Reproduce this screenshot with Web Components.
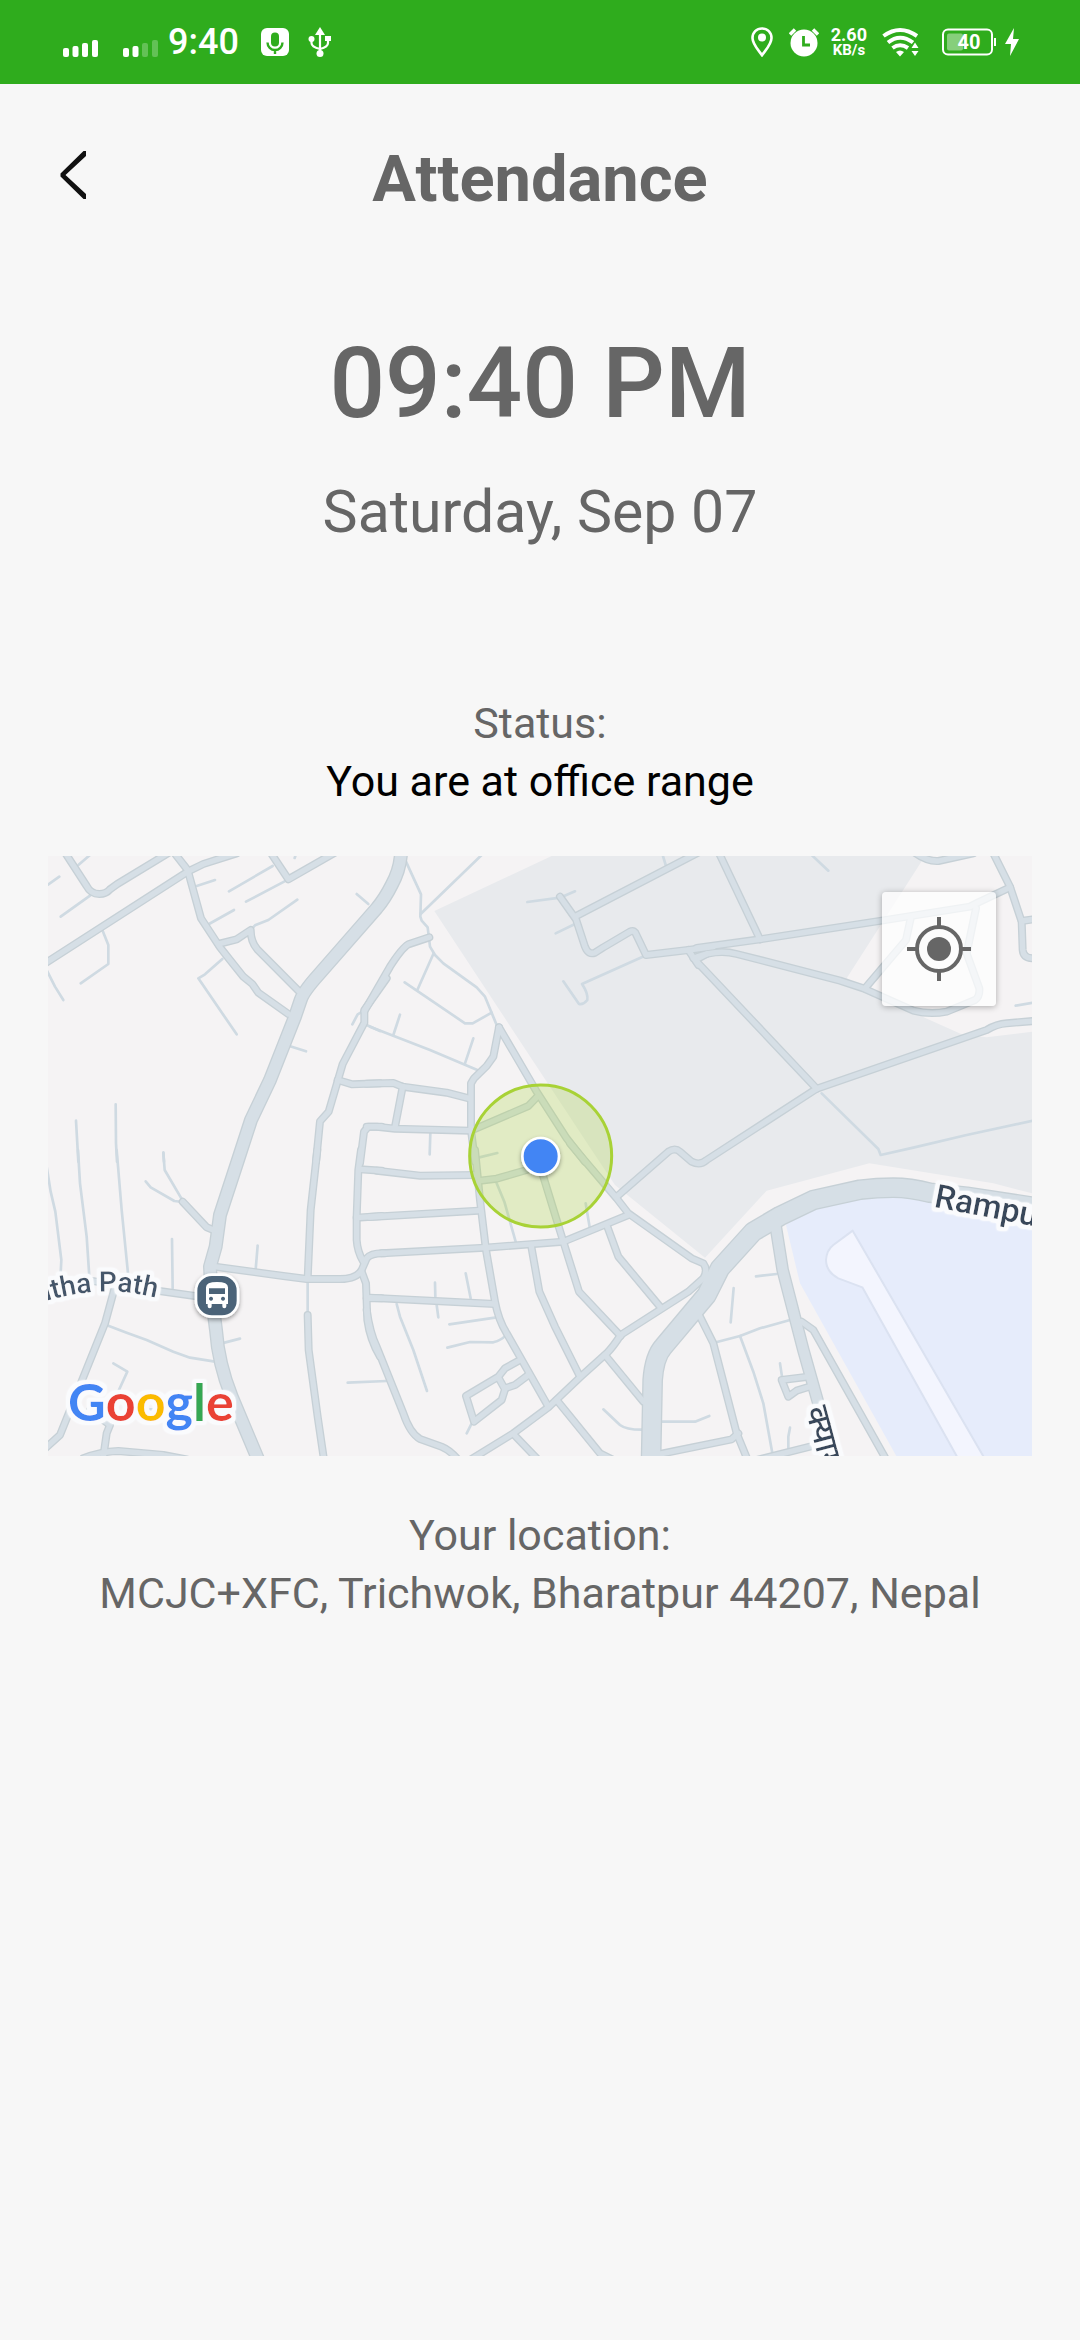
<!DOCTYPE html>
<html lang="en">
<head>
<meta charset="utf-8">
<meta name="viewport" content="width=device-width, initial-scale=1">
<title>Attendance</title>
<style>
  html { background: #f7f7f7; }
  body { margin: 0; font-family: Roboto, "Noto Sans", sans-serif; color: #666; }
</style>
</head>
<body>
<attendance-app></attendance-app>

<script>
const define = (name, html, setup) => {
  const template = document.createElement('template');
  template.innerHTML = html;
  customElements.define(name, class extends HTMLElement {
    constructor() {
      super();
      this.attachShadow({ mode: 'open' }).append(template.content.cloneNode(true));
      if (setup) setup(this.shadowRoot);
    }
  });
};

define('status-bar', `
  <style>
    :host { display: flex; justify-content: space-between; align-items: center; height: 84px;
            padding: 0 61px 0 63px; box-sizing: border-box; background: #2fac1d; color: #fff; }
    .side { display: flex; align-items: center; }
    svg { display: block; fill: #fff; }
    .first { margin-right: 25px; }
    .time { font-size: 36px; line-height: 40px; font-weight: 500; margin: 0 22px 0 10px; }
    .mic { margin-right: 19px; }
    .pin { margin-right: 16px; }
    .speed { display: flex; flex-direction: column; align-items: center; margin: 0 15px 0 12px; font-weight: 700; }
    .speed span { font-size: 18px; line-height: 16px; }
    .speed small { font-size: 15px; line-height: 15px; }
    .wifi { margin-right: 22px; }
    .battery { display: grid; place-items: center; width: 54px; height: 28px; margin-right: 9px; }
    .battery > * { grid-area: 1 / 1; }
    .battery span { font-size: 20px; line-height: 28px; font-weight: 700; }
  </style>
  <div class="side">
    <svg class="first" width="35" height="30" viewBox="0 0 35 30"><rect y="21" width="6" height="9" rx="2"/><rect x="9.500" y="19" width="6" height="11" rx="2"/><rect x="19" y="16" width="6" height="14" rx="2"/><rect x="29" y="13" width="6" height="17" rx="2"/></svg>
    <svg width="35" height="30" viewBox="0 0 35 30"><rect y="21" width="6" height="9" rx="2"/><rect x="9.500" y="19" width="6" height="11" rx="2"/><g opacity=".25"><rect x="19" y="16" width="6" height="14" rx="2"/><rect x="29" y="13" width="6" height="17" rx="2"/></g></svg>
    <span class="time">9:40</span>
    <svg class="mic" width="28" height="28" viewBox="0 0 28 28"><rect width="28" height="28" rx="6"/><path d="M6.500 14.500a7.500 7.500 0 0 0 15 0M14 22v4" fill="none" stroke="#2fac1d" stroke-width="2.400"/><rect x="10" y="4.500" width="8" height="14" rx="4" fill="#2fac1d"/></svg>
    <svg width="24" height="30" viewBox="0 0 24 30"><path d="M12 0l5 8H7z"/><path d="M12 6v20M3.500 12v4q0 4 8.500 6M20 12v4q0 4-8 6" fill="none" stroke="#fff" stroke-width="2.200"/><circle cx="3.500" cy="12" r="3"/><rect x="17" y="9" width="6" height="5"/><circle cx="12" cy="26.500" r="3.500"/></svg>
  </div>
  <div class="side">
    <svg class="pin" width="22" height="30" viewBox="0 0 22 30"><path d="M11 1.500c5.500 0 9.500 4 9.500 9.500 0 6-5 11-9.500 17.200C6.500 22 1.500 17 1.500 11c0-5.500 4-9.500 9.500-9.500z" fill="none" stroke="#fff" stroke-width="2.600"/><circle cx="11" cy="10.500" r="4"/></svg>
    <svg width="30" height="30" viewBox="0 0 30 30"><circle cx="15" cy="16" r="13.500"/><path d="M1 7.500l5-5M29 7.500l-5-5" stroke="#fff" stroke-width="3.500"/><path d="M14.500 9v9H21" fill="none" stroke="#2fac1d" stroke-width="2.800"/></svg>
    <div class="speed"><span>2.60</span><small>KB/s</small></div>
    <svg class="wifi" width="38" height="30" viewBox="0 0 38 30"><g fill="none" stroke="#fff" stroke-width="4"><path d="M1.500 9Q18 -3 35 9"/><path d="M6 15.500Q18 6 31 15.500"/><path d="M10.500 21Q18 15.500 26 21" /></g><path d="M14 25q4-3 8 0l-4 4.500zM33 15.500l3.500 5.500h-7zM33 29l3.500-5h-7z"/></svg>
    <div class="battery">
      <svg width="54" height="28" viewBox="0 0 54 28"><rect x="1" y="1.500" width="49" height="25" rx="5" fill="none" stroke="#fff" stroke-width="2"/><rect x="5" y="5.500" width="16" height="17" rx="2" opacity=".42"/><rect x="52" y="10" width="2" height="8"/></svg>
      <span>40</span>
    </div>
    <svg width="14" height="28" viewBox="0 0 14 28"><path d="M9 0L0 16h6l-1 12L14 11H8z"/></svg>
  </div>
`);

define('page-header', `
  <style>
    :host { display: grid; grid-template-columns: 96px 1fr 96px; align-items: start; padding: 47px 25px 0; }
    button { display: grid; place-items: center; width: 96px; height: 88px; padding: 0; border: 0; background: none; }
    h1 { margin: 0; text-align: center; font-size: 65px; line-height: 96px; font-weight: 700; }
  </style>
  <button type="button" aria-label="Back">
    <svg width="28" height="50" viewBox="0 0 28 50"><path d="M27 1v5L6.500 25 27 44v5h-2.500L1.500 26.500v-3L24.500 1z" fill="#111"/></svg>
  </button>
  <h1><slot></slot></h1>
`);

define('clock-panel', `
  <style>
    :host { display: flex; flex-direction: column; align-items: center; gap: 35px; padding-top: 98px; }
    .time { font-size: 98px; line-height: 118px; font-weight: 500; }
    .date { font-size: 59px; line-height: 68px; }
  </style>
  <div class="time"><slot name="time"></slot></div>
  <div class="date"><slot name="date"></slot></div>
`);

define('info-block', `
  <style>
    :host { display: block; text-align: center; font-size: 43px; line-height: 58px; }
    p { margin: 0; }
    .value { color: var(--value-color, inherit); }
  </style>
  <p><slot name="label"></slot></p>
  <p class="value"><slot></slot></p>
`);

const SHEETS = [
  { origin: [-24, -18],
    trunk: [[42, 'M1083 10Q1080 60 1055 105Q1035 145 1010 175L835 375Q790 425 782 450L765 500L690 690L633 810L594 930L540 1095L527 1190L510 1250L515 1340L528 1440Q535 1540 575 1640L655 1830']],
    street: ['M70 0L140 108Q152 132 178 132Q198 132 210 118L232 102L400 0', 'M0 350L443 65L490 42L590 10', 'M400 5L443 60L483 205L540 292L570 330L610 380L637 402L655 428L745 492', 'M690 5L745 88L890 5', 'M535 282L590 268L632 240Q632 275 652 298L775 422', 'M1040 385L973 480L973 518L908 642L866 785L840 814L828 935', 'M893 690L937 703L1020 700', 'M960 940L972 845L985 830L1025 830'],
    lane: ['M116 44L150 15', 'M24 104L58 80', 'M150 137L62 200', 'M187 240L205 285V342L122 400', 'M20 360L45 410L70 450', 'M470 108L525 90', 'M507 222L582 180', 'M547 327L495 373L475 385L590 553', 'M567 124L698 48', 'M618 155L738 92', 'M764 24l4-12', 'M632 240L645 226L685 210L772 149', 'M950 132L985 162', 'M937 523L953 493L967 485', 'M980 525L1020 543', 'M748 588L798 604', 'M108 812L115 935', 'M227 763L228 880L231 935', 'M370 908L372 935'] },
  { origin: [966, -18],
    street: ['M-17 484L60 350Q95 295 115 283L178 262', 'M-10 701L70 699L98 710L230 728L300 746', 'M98 710L75 830', 'M-10 830L20 830L75 836L300 842', 'M387 532L370 620L350 648L312 685L303 700L303 840L315 935', 'M387 532L500 725L590 865L645 935', 'M303 842L475 768L500 742', 'M570 140L618 208L645 290Q655 316 675 308L700 292L780 245Q790 240 796 248L828 315L955 300L1030 290', 'M615 200L990 5', 'M955 300L985 345', 'M985 325L1010 312'],
    lane: ['M108 35L153 133L151 200L155 212L173 232L180 290L195 315L220 340L320 412L345 440L380 525', 'M152 192L335 15', 'M190 312L143 418', 'M104 397L285 520H308L365 488', 'M0 530L180 600L322 660', 'M90 494L70 555', 'M310 565L285 640', 'M181 850L179 913', 'M472 156L570 143L615 124', 'M557 250L615 222', 'M878 15L888 48', 'M825 317L636 402Q655 430 652 450Q640 465 627 462L580 394', 'M325 923L382 909'] },
  { origin: [1956, -18],
    street: ['M55 5L180 268', 'M-10 294L180 268L545 212L810 170L835 157L930 112', 'M880 10L930 110L965 215L968 300Q970 325 1000 325', 'M965 213L1000 208', 'M-20 325Q50 296 110 312L200 335L420 392L490 415L640 482Q690 495 740 485L825 450Q840 440 838 415L800 310L828 175', 'M632 205L618 270L495 415', 'M-10 335L350 716', 'M350 716L860 540Q890 522 920 520L1000 513', 'M640 5Q680 35 715 33L820 10'],
    lane: ['M335 15L385 62', 'M365 730L535 897L542 915L640 893L800 855L1000 812', 'M947 467L1000 458'] },
  { origin: [-24, 882],
    street: ['M428 155L500 232L520 240', 'M525 350L730 378L800 387H900Q950 387 965 360L980 325Q995 308 1035 310', 'M832 0L812 180L803 385', 'M803 495L806 600L833 800L852 930', 'M963 0L955 60L950 200V270Q952 305 970 335', 'M965 365L978 400L982 510Q990 570 1020 620', 'M960 58L1025 62', 'M950 203L1025 198', 'M980 445H1025', 'M480 440L300 415L150 392', 'M225 410L195 520L60 855L5 905', 'M190 920L200 850L210 825L150 780', 'M130 925Q180 905 235 903L370 915L440 928'],
    lane: ['M20 50L32 125L46 185L64 330L62 370', 'M114 0L120 100L140 260L148 380', 'M230 0L245 180L267 400', 'M396 267L398 415', 'M370 8L374 60L428 152', 'M317 94L332 112L403 153L428 156', 'M653 287L647 358', 'M803 390V495', 'M205 527L260 548L320 570L400 605L450 623L525 635', 'M545 580L600 566', 'M220 640L262 665L230 735', 'M923 698L1040 693', 'M330 778H590'] },
  { origin: [966, 882],
    street: ['M315 0L330 150L348 300L375 455Q385 510 410 550L535 770', 'M20 62L150 77L320 75', 'M0 201L325 182', 'M35 310L345 293L580 275L775 195', 'M0 443L375 462', 'M-10 480Q0 550 20 590L100 790Q120 850 150 867L215 890Q240 900 265 930', 'M330 92L380 86L470 60L512 25', 'M520 80L580 275L627 425L752 558', 'M600 -20L740 145L775 190L965 325L1000 340Q1015 360 1000 385L955 425L752 555Q730 590 710 610L630 682L535 772L430 850L300 930', 'M484 290L508 425L555 530L630 680', 'M712 230L745 320L870 470', 'M705 615L820 755', 'M560 750L690 910L730 930', 'M430 852L505 930', 'M450 630L405 655L385 680L288 738L312 815L395 750L405 718L385 682', 'M405 715L435 705L475 675', 'M870 912L1085 868L1105 850', 'M740 140L895 5Q915 -8 930 5L965 35Q990 48 1010 30L1340 -184'],
    lane: ['M380 100L403 155L437 275', 'M647 160L659 232', 'M195 398L196 440M200 465L205 502', 'M287 370L302 445', 'M238 523L375 503', 'M232 593L300 576L370 577Q395 570 405 558', 'M80 462L90 500L130 600L171 723', 'M305 820L290 850', 'M700 778L750 825Q770 840 820 839', 'M868 815H975L1018 798'] },
  { origin: [1956, 882],
    trunk: [[62, 'M1010 172L800 140L690 128Q630 113 580 113Q530 113 480 119L340 150L240 198L160 245L60 355L20 435L-110 590Q-137 620 -142 690L-147 935'], [38, 'M225 215L248 360L310 600L355 760L400 930']],
    street: ['M305 515L340 540L565 940', 'M-5 490L40 580L110 850L145 935', 'M170 930L330 890', 'M325 680L245 690L265 740L290 722L335 708'],
    lane: ['M168 379L230 372', 'M101 414L92 517', 'M48 577L120 558L180 535L270 510', 'M120 558L160 665L190 760L218 915', 'M240 640L246 680', 'M270 833L265 860V895'] }
];

define('location-map', `
  <style>
    :host { display: block; position: relative; aspect-ratio: 984 / 600; overflow: hidden; background: #f5f3f4; }
    .map { display: block; width: 100%; height: 100%; }
    .streets path { fill: none; stroke-linejoin: round; stroke-linecap: round; }
    text { font-family: Roboto, "Noto Sans", "Noto Sans Devanagari", sans-serif; font-weight: 500; }
    .wordmark { font-family: Lato, sans-serif; font-weight: 700; }
    button { position: absolute; top: 36px; right: 36px; width: 114px; height: 114px; padding: 0; border: 0;
             display: grid; place-items: center; border-radius: 4px; background: rgba(255,255,255,.72);
             box-shadow: 0 1px 6px rgba(0,0,0,.3); }
  </style>
  <svg class="map" viewBox="0 0 2952 1800" preserveAspectRatio="xMidYMid slice" role="img" aria-label="Map of your location">
    <defs>
      <filter id="halo" x="-20%" y="-40%" width="140%" height="180%">
        <feMorphology in="SourceAlpha" operator="dilate" radius="9"/>
        <feGaussianBlur stdDeviation="3"/>
        <feComponentTransfer result="mask"><feFuncA type="linear" slope="3"/></feComponentTransfer>
        <feFlood flood-color="#fafbfd"/><feComposite in2="mask" operator="in"/>
        <feMerge><feMergeNode/><feMergeNode in="SourceGraphic"/></feMerge>
      </filter>
      <filter id="lift" x="-30%" y="-30%" width="160%" height="160%"><feDropShadow dx="0" dy="6" stdDeviation="7" flood-opacity=".38"/></filter>
      <path id="path-line" d="M-30 1343Q75 1307 176 1306Q260 1304 400 1345"/>
    </defs>
    <path fill="#e8eaed" d="M1159 165L1511 0H2631L2396 367L2556 452L2746 537L2816 544L2952 527V1012L2836 982L2464 922L2156 1004L1971 1205L1701 987L1631 882Z"/>
    <path fill="#e6ecfb" d="M2214 1107L2256 1282L2546 1802H2952V1040L2536 1002L2286 1042Z"/>
    <path fill="#f3f5fe" stroke="#dbe2f1" stroke-width="6" stroke-linejoin="round" d="M2414 1124L2816 1818H2736L2443 1294L2371 1267Q2334 1247 2334 1212Q2336 1182 2356 1167Z"/>
    <g class="streets"></g>
    <circle cx="1478" cy="900" r="213" fill="#a9d334" fill-opacity=".25" stroke="#a8d236" stroke-width="9"/>
    <circle cx="1478" cy="901" r="55" fill="#4285f4" stroke="#fff" stroke-width="8" filter="url(#lift)"/>
    <g filter="url(#halo)" fill="#45566b" font-size="84"><text><textPath href="#path-line">ntha Path</textPath></text></g>
    <g filter="url(#halo)" fill="#37475a" font-size="99"><text transform="translate(2656 1052) rotate(11)">Rampur</text></g>
    <g filter="url(#halo)" fill="#37475a" font-size="99"><text transform="translate(2272 1660) rotate(75)" lang="ne">क्याम्पा</text></g>
    <g filter="url(#lift)"><rect x="444" y="1256" width="126" height="126" rx="48" fill="#4b6378" stroke="#fff" stroke-width="8"/></g>
    <path fill="#fff" fill-rule="evenodd" d="M474 1294q0-16 33-16t33 16v50h-5v7q0 6-6 6t-6-6v-7h-32v7q0 6-6 6t-6-6v-7h-5zM483 1297v17h48v-17zM489 1322a6 6 0 1 0 .1 0zM525 1322a6 6 0 1 0 .1 0z"/>
    <g filter="url(#halo)"><text class="wordmark" x="60" y="1694" font-size="156"><tspan fill="#4285f4">G</tspan><tspan fill="#ea4335">o</tspan><tspan fill="#fbbc05">o</tspan><tspan fill="#4285f4">g</tspan><tspan fill="#34a853">l</tspan><tspan fill="#ea4335">e</tspan></text></g>
  </svg>
  <button type="button" aria-label="Center on my location">
    <svg width="64" height="64" viewBox="0 0 64 64" fill="none" stroke="#666" stroke-width="4"><circle cx="32" cy="32" r="22"/><path d="M32 0v9M32 55v9M0 32h9M55 32h9"/><circle cx="32" cy="32" r="12" fill="#666" stroke="none"/></svg>
  </button>
`, root => {
  const layers = { lane: '', casing: '', surface: '' };
  for (const { origin, trunk = [], street, lane } of SHEETS) {
    const line = (d, color, width) =>
      `<path transform="translate(${origin})" d="${d}" stroke="${color}" stroke-width="${width}"/>`;
    for (const d of lane) layers.lane += line(d, '#cfdae2', 8);
    for (const [width, d] of [...street.map(d => [24, d]), ...trunk]) {
      layers.casing += line(d, '#c6d0d6', width);
      layers.surface += line(d, '#d6dfe6', width - 8);
    }
  }
  root.querySelector('.streets').innerHTML = layers.lane + layers.casing + layers.surface;
});

define('attendance-app', `
  <style>
    :host { display: flex; flex-direction: column; min-height: 100vh; }
    main { display: flex; flex-direction: column; padding: 0 48px; }
    .status { --value-color: #000; margin: 148px 0 46px; }
    .location { margin-top: 50px; }
  </style>
  <status-bar></status-bar>
  <page-header>Attendance</page-header>
  <main>
    <clock-panel><span slot="time">09:40 PM</span><span slot="date">Saturday, Sep 07</span></clock-panel>
    <info-block class="status"><span slot="label">Status:</span>You are at office range</info-block>
    <location-map></location-map>
    <info-block class="location"><span slot="label">Your location:</span>MCJC+XFC, Trichwok, Bharatpur 44207, Nepal</info-block>
  </main>
`);
</script>
</body>
</html>
